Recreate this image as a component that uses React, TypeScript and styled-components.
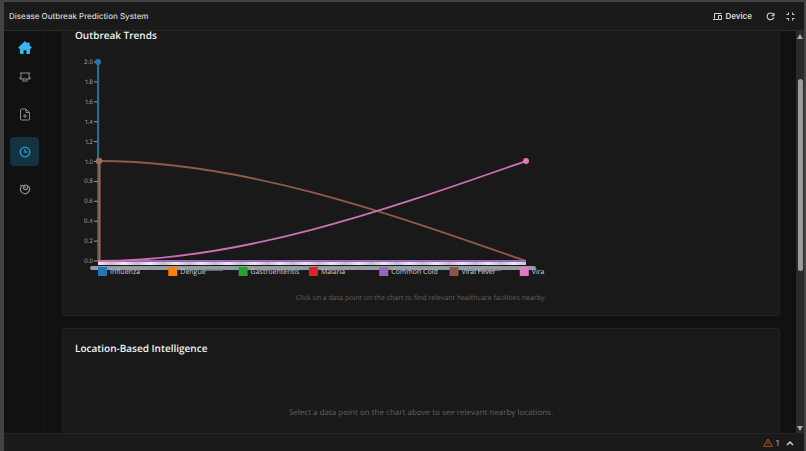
import React from "react";
import styled, { createGlobalStyle } from "styled-components";

const GlobalStyle = createGlobalStyle`
  * { box-sizing: border-box; }
  html, body, #root { height: 100%; }
  body {
    margin: 0;
    background: #434343;
    font-family: "Open Sans", "Noto Sans", sans-serif;
    text-rendering: geometricPrecision;
    overflow: hidden;
  }
  button { font: inherit; color: inherit; background: none; border: 0; padding: 0; cursor: pointer; }
`;

const Frame = styled.div`
  height: 100%;
  padding: 2px 2px 0 4px;
`;

const Window = styled.div`
  height: 100%;
  display: flex;
  flex-direction: column;
  background: #111111;
`;

const TitleBar = styled.header`
  flex: none;
  height: 29px;
  display: flex;
  align-items: center;
  justify-content: space-between;
  padding: 0 9px 0 5px;
  background: #1a1a1a;
  border-bottom: 1px solid #2a2a2a;
  color: #d8d8d8;
  font-family: Inter, sans-serif;
`;

const AppTitle = styled.h1`
  margin: 0;
  font-size: 8px;
  font-weight: 500;
  line-height: 12px;
`;

const Actions = styled.div`
  display: flex;
  align-items: center;
  gap: 11px;
`;

const ToolButton = styled.button`
  display: flex;
  align-items: center;
  gap: 3px;
  font-size: 8px;
  font-weight: 600;
  line-height: 12px;
  svg { display: block; }
`;

const DeviceButton = styled(ToolButton)`
  padding-right: 3px;
`;

const Body = styled.div`
  flex: 1;
  min-height: 0;
  display: flex;
`;

const Sidebar = styled.nav`
  flex: none;
  width: 41px;
  display: flex;
  flex-direction: column;
  align-items: center;
  padding: 2px 0 0 1px;
  gap: 8px;
  border-right: 1px solid #1a1a1a;
`;

const NavButton = styled.button<{ $active?: boolean; $short?: boolean }>`
  flex: none;
  width: 29px;
  height: ${(p) => (p.$short ? "14px" : "29px")};
  margin-bottom: ${(p) => (p.$short ? "8px" : "0")};
  display: grid;
  place-items: center;
  border-radius: 4px;
  color: ${(p) => (p.$active ? "#2b9fd0" : "#8b8b8b")};
  background: ${(p) => (p.$active ? "#143340" : "transparent")};
  svg { display: block; }
`;

const Content = styled.main`
  flex: 1;
  min-width: 0;
  display: flex;
  flex-direction: column;
  gap: 12px;
  padding: 0 16px 0 17px;
`;

const Card = styled.section<{ $continued?: boolean }>`
  flex: ${(p) => (p.$continued ? "none" : "1 0 auto")};
  padding: ${(p) => (p.$continued ? "0 12px 10px" : "12px 12px 0")};
  background: #191919;
  border: 1px solid #242424;
  border-top-width: ${(p) => (p.$continued ? "0" : "1px")};
  border-bottom-width: ${(p) => (p.$continued ? "1px" : "0")};
  border-radius: ${(p) => (p.$continued ? "0 0 4px 4px" : "4px 4px 0 0")};
`;

const Heading = styled.h2<{ $tight?: boolean }>`
  margin: 0;
  font-size: 10px;
  font-weight: 600;
  line-height: ${(p) => (p.$tight ? "8px" : "14px")};
  color: #f2f2f2;
`;

const ChartArea = styled.div`
  margin-top: 12px;
  overflow: hidden;
  svg { display: block; }
`;

const Hint = styled.p<{ $large?: boolean }>`
  margin: ${(p) => (p.$large ? "52px 0 0" : "12px 0 0")};
  text-align: center;
  font-size: ${(p) => (p.$large ? "8px" : "7px")};
  line-height: 12px;
  color: #616161;
`;

const ScrollTrack = styled.div`
  flex: none;
  width: 8px;
  display: flex;
  flex-direction: column;
  align-items: center;
  background: #2a2a2a;
  padding: 3px 0 2px;
  svg { display: block; }
`;

const Thumb = styled.div`
  width: 5px;
  flex: 193;
  margin-top: 40px;
  border-radius: 3px;
  background: #9b9b9b;
`;

const TrackRest = styled.div`
  flex: 155;
`;

const StatusBar = styled.footer`
  flex: none;
  height: 18px;
  display: flex;
  align-items: center;
  justify-content: flex-end;
  gap: 7px;
  padding-right: 10px;
  background: #1a1a1a;
  border-top: 1px solid #242424;
  font-family: Inter, sans-serif;
  color: #b5b5b5;
`;

const StatusButton = styled(ToolButton)`
  font-weight: 400;
`;

const series = [
  { name: "Influenza", color: "#1f77b4" },
  { name: "Dengue", color: "#ff7f0e" },
  { name: "Gastroenteritis", color: "#2ca02c" },
  { name: "Malaria", color: "#d62728" },
  { name: "Common Cold", color: "#9467bd" },
  { name: "Viral Fever", color: "#8c564b" },
  { name: "Vira", color: "#e377c2" },
];

const ticks = ["2.0", "1.8", "1.6", "1.4", "1.2", "1.0", "0.8", "0.6", "0.4", "0.2", "0.0"];

function TrendChart() {
  return (
    <svg width="480" height="230" viewBox="75 51 480 230" role="img" aria-label="Outbreak trends by disease">
      <defs>
        <linearGradient id="labels" gradientUnits="userSpaceOnUse" x1="98" x2="111" y1="0" y2="0" spreadMethod="reflect">
          <stop offset="0" stopColor="#ece8ee" />
          <stop offset="1" stopColor="#c4bfc9" />
        </linearGradient>
      </defs>
      {ticks.map((t, i) => (
        <g key={t}>
          <text x="93" y={64 + i * 19.9} textAnchor="end" fontFamily="Inter, sans-serif" fontSize="6" fill="#a2a2a2">
            {t}
          </text>
          <path d={`M94 ${62 + i * 19.9}H98`} stroke="#a0a0a0" strokeWidth="1" />
        </g>
      ))}
      <path d="M98 62V161" stroke="#20719f" strokeWidth="2" />
      <path d="M98 161V261" stroke="#6f9255" strokeWidth="1" />
      <path d="M99.500 161V261" stroke="#a56762" strokeWidth="2" />
      <path d="M98 161C241 161 383 211 526 261" fill="none" stroke="#8f5a4d" strokeWidth="1.800" />
      <path d="M98 261H526" stroke="#9467bd" strokeWidth="2" />
      <path d="M98 261C241 261 383 211 526 161" fill="none" stroke="#cf70b3" strokeWidth="1.800" />
      <circle cx="98" cy="62" r="3" fill="#1f77b4" />
      <circle cx="99" cy="161" r="3.200" fill="#a06a5f" />
      <circle cx="526" cy="161" r="3" fill="#e377c2" />
      <rect x="98" y="262" width="428" height="3" fill="url(#labels)" />
      <path d="M92 268H534" stroke="#929ba6" strokeWidth="4" strokeLinecap="round" />
      <path d="M205 270H223M465 270H501" stroke="#7f8791" strokeWidth="1.500" />
      {series.map((s, i) => (
        <g key={s.name}>
          <rect x={98 + i * 70.3} y="267" width="9" height="9" fill={s.color} />
          <text
            x={110 + i * 70.3}
            y="274"
            fontFamily="'Open Sans', sans-serif"
            fontSize="7"
            fill="#d0d2d6"
          >
            {s.name}
          </text>
        </g>
      ))}
    </svg>
  );
}

const HomeIcon = () => (
  <svg width="14" height="14" viewBox="0 0 14 14" fill="#38b6f2">
    <path d="M6.300.7a1 1 0 0 1 1.400 0L9.600 2.500V1.400h2v3l1.900 1.900c.6.6.2 1.100-.4 1.100h-1V12a1 1 0 0 1-1 1H8.400V9.300H5.600V13H2.900a1 1 0 0 1-1-1V7.400h-1C.3 7.400-.1 6.900.5 6.300Z" />
  </svg>
);

const MonitorIcon = () => (
  <svg width="12" height="12" viewBox="0 0 12 12" fill="none" stroke="currentColor" strokeWidth="1">
    <path d="M.8 2h10.400M2 2v6h8V2M1 6v2h1M11 6v2h-1M4 8v1.500M8 8v1.500M3 10h6" />
  </svg>
);

const FileIcon = () => (
  <svg width="12" height="13" viewBox="0 0 12 13" fill="none" stroke="currentColor" strokeWidth="1" strokeLinejoin="round">
    <path d="M7 1H2.500a1 1 0 0 0-1 1v9a1 1 0 0 0 1 1h7a1 1 0 0 0 1-1V4.500ZM7 1v3.500h3.500M6 6v4M4 8h4" />
  </svg>
);

const ClockIcon = () => (
  <svg width="12" height="12" viewBox="0 0 12 12" fill="none" stroke="currentColor" strokeWidth="1.200">
    <circle cx="6" cy="6" r="4.800" />
    <path d="M6 3v3.200h2.500" />
  </svg>
);

const SwirlIcon = () => (
  <svg width="12" height="12" viewBox="0 0 12 12" fill="none" stroke="currentColor" strokeWidth="1.100" strokeLinecap="round">
    <path d="M1.500 2.500H3.500M2.300 3.600A4.500 4.500 0 1 0 9.300 3.100" />
    <circle cx="6.500" cy="4.300" r="2.300" />
    <path d="M6.500 4.500 5.300 3.300" />
  </svg>
);

const DeviceIcon = () => (
  <svg width="9" height="9" viewBox="0 0 9 9" fill="none" stroke="currentColor" strokeWidth="1">
    <path d="M8.500 1.500h-7v5M0 7.500h5M5.500 3.500h3v4h-3Z" />
  </svg>
);

const RefreshIcon = () => (
  <svg width="9" height="9" viewBox="0 0 9 9" fill="none" stroke="currentColor" strokeWidth="1.100">
    <path d="M7.200 2.300A3.400 3.400 0 1 0 7.700 5.500M8 1v2.800H5.200" />
  </svg>
);

const CollapseIcon = () => (
  <svg width="9" height="9" viewBox="0 0 9 9" fill="none" stroke="currentColor" strokeWidth="1">
    <path d="M2.500.5v2h-2M6.500.5v2h2M2.500 8.500v-2h-2M6.500 8.500v-2h2" />
  </svg>
);

export default function App() {
  return (
    <>
      <GlobalStyle />
      <Frame>
        <Window>
          <TitleBar>
            <AppTitle>Disease Outbreak Prediction System</AppTitle>
            <Actions>
              <DeviceButton><DeviceIcon />Device</DeviceButton>
              <ToolButton aria-label="Refresh"><RefreshIcon /></ToolButton>
              <ToolButton aria-label="Exit full screen"><CollapseIcon /></ToolButton>
            </Actions>
          </TitleBar>
          <Body>
            <Sidebar aria-label="Main">
              <NavButton aria-label="Home"><HomeIcon /></NavButton>
              <NavButton $short aria-label="Monitor"><MonitorIcon /></NavButton>
              <NavButton aria-label="New report"><FileIcon /></NavButton>
              <NavButton $active aria-label="History"><ClockIcon /></NavButton>
              <NavButton aria-label="Insights"><SwirlIcon /></NavButton>
            </Sidebar>
            <Content>
              <Card $continued>
                <Heading $tight>Outbreak Trends</Heading>
                <ChartArea><TrendChart /></ChartArea>
                <Hint>Click on a data point on the chart to find relevant healthcare facilities nearby.</Hint>
              </Card>
              <Card>
                <Heading>Location-Based Intelligence</Heading>
                <Hint $large>Select a data point on the chart above to see relevant nearby locations.</Hint>
              </Card>
            </Content>
            <ScrollTrack aria-hidden="true">
              <svg width="6" height="5" viewBox="0 0 6 5" fill="#a8a8a8"><path d="M3 0 6 5H0Z" /></svg>
              <Thumb />
              <TrackRest />
              <svg width="6" height="5" viewBox="0 0 6 5" fill="#a8a8a8"><path d="M0 0H6L3 5Z" /></svg>
            </ScrollTrack>
          </Body>
          <StatusBar>
            <StatusButton aria-label="1 warning">
              <svg width="10" height="9" viewBox="0 0 10 9" fill="none" stroke="#b5501c" strokeWidth="1">
                <path d="M5 .9 9.200 8.300H.8ZM5 3.300v2.400M5 6.500v.9" strokeLinejoin="round" />
              </svg>
              1
            </StatusButton>
            <StatusButton aria-label="Expand panel">
              <svg width="8" height="6" viewBox="0 0 8 6" fill="none" stroke="#d0d0d0" strokeWidth="1.500">
                <path d="M1 5 4 2 7 5" />
              </svg>
            </StatusButton>
          </StatusBar>
        </Window>
      </Frame>
    </>
  );
}
